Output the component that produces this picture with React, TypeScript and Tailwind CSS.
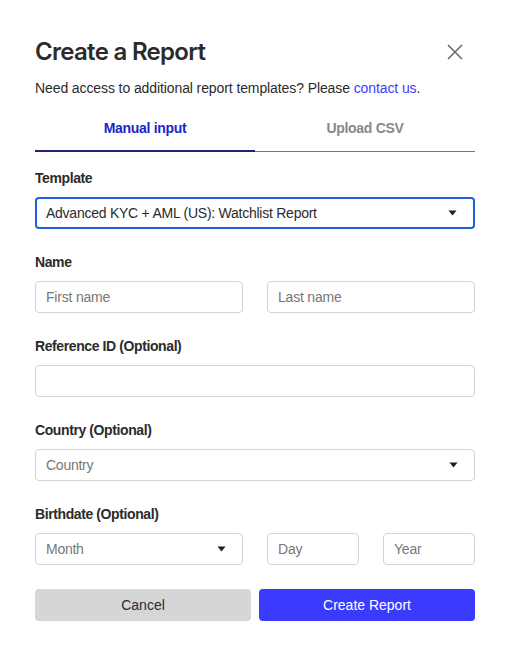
import { useState } from 'react';

function Caret() {
  return (
    <svg width="9" height="6" viewBox="0 0 9 6" className="shrink-0">
      <path d="M0.5 0.5 H8.5 L4.5 5.5 Z" fill="#1f1f1f" />
    </svg>
  );
}

function Label({ children }: { children: React.ReactNode }) {
  return (
    <div className="h-5 text-[14px] font-semibold leading-5 tracking-[-0.4px] text-[#2b2b2b]">
      {children}
    </div>
  );
}

function TextBox({ placeholder, className = '' }: { placeholder?: string; className?: string }) {
  return (
    <div
      className={`flex h-8 items-center rounded border border-[#d4d4d4] px-[10px] text-[14px] tracking-[-0.2px] text-[#777] ${className}`}
    >
      {placeholder}
    </div>
  );
}

function SelectBox({
  value,
  placeholder,
  focused,
  className = '',
}: {
  value?: string;
  placeholder?: string;
  focused?: boolean;
  className?: string;
}) {
  return (
    <div
      className={`flex h-8 items-center justify-between rounded pr-[16px] text-[14px] tracking-[-0.25px] ${
        focused ? 'border-2 border-[#1f5fe0] pl-[9px]' : 'border border-[#d4d4d4] pl-[10px]'
      } ${className}`}
    >
      <span className={value ? 'text-[#2b2b2b]' : 'text-[#777]'}>{value || placeholder}</span>
      <Caret />
    </div>
  );
}

export default function App() {
  const [tab, setTab] = useState<'manual' | 'csv'>('manual');

  const tabClass = (on: boolean) =>
    `flex-1 pb-[12px] text-[14px] font-bold leading-5 tracking-[-0.3px] ${
      on ? 'border-b-2 border-[#1d2370] text-[#1c24c9]' : 'border-b border-[#777] pb-[13px] text-[#888]'
    }`;

  return (
    <div
      className="h-[658px] w-[511px] bg-white pl-[35px] pr-[36px] pt-[37px]"
      style={{ fontFamily: '"Liberation Sans", Arial, sans-serif' }}
    >
      <div className="flex items-center justify-between">
        <h1
          className="text-[24px] font-semibold leading-[30px] tracking-[-0.7px] text-[#2b2b2b]"
          style={{ fontFamily: 'Inter, "Liberation Sans", sans-serif' }}
        >
          Create a Report
        </h1>
        <button type="button" className="mr-[12px]" aria-label="Close">
          <svg width="16" height="16" viewBox="0 0 16 16">
            <path d="M1 1 L15 15 M15 1 L1 15" stroke="#666" strokeWidth="1.5" />
          </svg>
        </button>
      </div>

      <p className="mt-[11px] text-[14px] leading-5 tracking-[-0.1px] text-[#2b2b2b]">
        Need access to additional report templates? Please{' '}
        <a href="#" className="text-[#3d3dff]">
          contact us
        </a>
        .
      </p>

      <div className="mt-[20px] flex">
        <button type="button" onClick={() => setTab('manual')} className={tabClass(tab === 'manual')}>
          Manual input
        </button>
        <button type="button" onClick={() => setTab('csv')} className={tabClass(tab === 'csv')}>
          Upload CSV
        </button>
      </div>

      <div className="mt-[16px]">
        <Label>Template</Label>
        <SelectBox className="mt-[9px]" focused value="Advanced KYC + AML (US): Watchlist Report" />
      </div>

      <div className="mt-[23px]">
        <Label>Name</Label>
        <div className="mt-[9px] flex gap-6">
          <TextBox className="flex-1" placeholder="First name" />
          <TextBox className="flex-1" placeholder="Last name" />
        </div>
      </div>

      <div className="mt-[23px]">
        <Label>Reference ID (Optional)</Label>
        <TextBox className="mt-[9px]" />
      </div>

      <div className="mt-[23px]">
        <Label>Country (Optional)</Label>
        <SelectBox className="mt-[9px]" placeholder="Country" />
      </div>

      <div className="mt-[23px]">
        <Label>Birthdate (Optional)</Label>
        <div className="mt-[9px] flex gap-6">
          <SelectBox className="w-[208px]" placeholder="Month" />
          <TextBox className="w-[92px]" placeholder="Day" />
          <TextBox className="w-[92px]" placeholder="Year" />
        </div>
      </div>

      <div className="mt-[24px] flex gap-2">
        <button type="button" className="h-8 flex-1 rounded bg-[#d6d6d6] text-[14px] text-[#2b2b2b]">
          Cancel
        </button>
        <button type="button" className="h-8 flex-1 rounded bg-[#3b3bff] text-[14px] text-white">
          Create Report
        </button>
      </div>
    </div>
  );
}
